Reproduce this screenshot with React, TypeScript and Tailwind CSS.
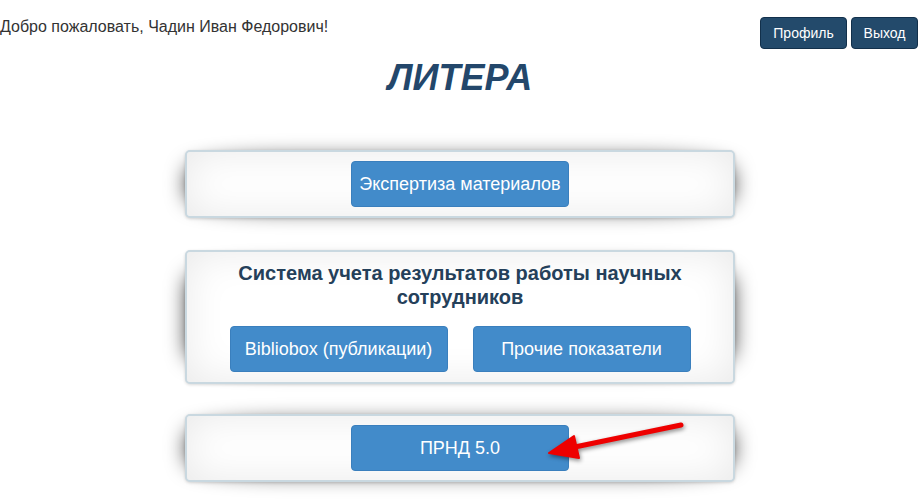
import React from 'react';

const card =
  "relative w-[550px] mx-auto rounded-[5px] border-2 border-[#c9d8e0] bg-white shadow-[inset_0_0_40px_rgba(0,0,0,0.09),0_1px_3px_rgba(0,0,0,0.15)] before:content-[''] before:absolute before:-z-10 before:top-[13%] before:bottom-[13%] before:left-[2px] before:right-[2px] before:rounded-[100px/12px] before:shadow-[0_0_22px_rgba(0,0,0,1)]";

const bigBtn =
  'h-[46px] w-[218px] rounded-[4px] border border-[#3a7fbd] bg-[#428bca] text-[18px] text-white leading-none';

function Arrow() {
  return (
    <svg
      className="absolute left-[540px] top-[415px] drop-shadow-[1px_2px_2px_rgba(0,0,0,0.45)]"
      width="150"
      height="50"
      viewBox="540 415 150 50"
    >
      <line x1="681" y1="425" x2="570" y2="448" stroke="#ee0000" strokeWidth="5" strokeLinecap="round" />
      <polygon points="549,453 574,436 579,458" fill="#ee0000" stroke="#ee0000" strokeWidth="2" strokeLinejoin="round" />
    </svg>
  );
}

export default function App() {
  return (
    <div
      className="relative isolate w-[924px] h-[504px] overflow-hidden bg-white text-[#333]"
      style={{ fontFamily: '"Liberation Sans", Arial, sans-serif' }}
    >
      <div className="flex items-start justify-between pt-[17px] pr-[6px]">
        <div className="text-[16px] leading-[20px]">Добро пожаловать, Чадин Иван Федорович!</div>
        <div className="flex gap-[4px]">
          <button className="h-[32px] w-[87px] rounded-[4px] border border-[#12304b] bg-[#234a6b] text-[14px] text-white">
            Профиль
          </button>
          <button className="h-[32px] w-[67px] rounded-[4px] border border-[#12304b] bg-[#234a6b] text-[14px] text-white">
            Выход
          </button>
        </div>
      </div>

      <div className="w-[920px]">
        <h1 className="mt-[9px] text-center text-[36px] leading-[40px] font-bold italic text-[#23476b]">ЛИТЕРА</h1>

        <div className={card + ' mt-[52px] py-[9px] flex justify-center'}>
          <button className={bigBtn}>Экспертиза материалов</button>
        </div>

        <div className={card + ' mt-[32px] pt-[9px] pb-[10px]'}>
          <h2 className="mx-auto w-[460px] text-center text-[20px] leading-[24px] font-bold text-[#24405a]">
            Система учета результатов работы научных сотрудников
          </h2>
          <div className="mt-[17px] flex justify-center gap-[25px]">
            <button className={bigBtn + ' h-[45px]'}>Bibliobox (публикации)</button>
            <button className={bigBtn + ' h-[45px]'}>Прочие показатели</button>
          </div>
        </div>

        <div className={card + ' mt-[30px] py-[9px] flex justify-center'}>
          <button className={bigBtn}>ПРНД 5.0</button>
        </div>
      </div>

      <Arrow />
    </div>
  );
}
